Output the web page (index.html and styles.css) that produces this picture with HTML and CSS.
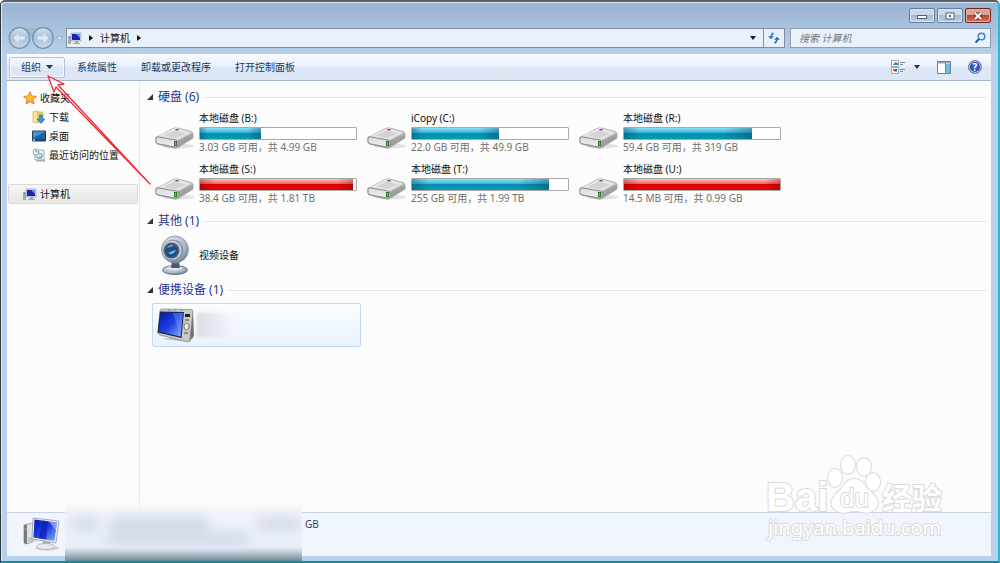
FILE: index.html
```html
<!DOCTYPE html>
<html lang="zh-CN">
<head>
<meta charset="utf-8">
<title>计算机</title>
<link rel="stylesheet" href="styles.css">
</head>
<body>
<svg class="defs" width="0" height="0" aria-hidden="true">
  <defs>
    <linearGradient id="metal" x1="0" y1="0" x2="1" y2="1"><stop offset="0" stop-color="#fafafa"/><stop offset=".55" stop-color="#cfcfcf"/><stop offset="1" stop-color="#858585"/></linearGradient>
    <linearGradient id="front" x1="0" y1="0" x2="0" y2="1"><stop offset="0" stop-color="#d7d7dc"/><stop offset="1" stop-color="#f2f2f8"/></linearGradient>
    <linearGradient id="screen" x1="0" y1="0" x2="1" y2="1"><stop offset="0" stop-color="#0716a8"/><stop offset=".5" stop-color="#1d3fe0"/><stop offset="1" stop-color="#8db6ff"/></linearGradient>
    <radialGradient id="ball" cx=".4" cy=".3" r=".8"><stop offset="0" stop-color="#eef2f6"/><stop offset=".6" stop-color="#a9b6c6"/><stop offset="1" stop-color="#5c6b80"/></radialGradient>
    <linearGradient id="gold" x1="0" y1="0" x2="0" y2="1"><stop offset="0" stop-color="#ffe05a"/><stop offset="1" stop-color="#ff9c1c"/></linearGradient>
    <linearGradient id="disc" x1="0" y1="0" x2="0" y2="1"><stop offset="0" stop-color="#d3e0ef"/><stop offset=".5" stop-color="#a9bfd8"/><stop offset="1" stop-color="#c9dbef"/></linearGradient>
    <symbol id="drive" viewBox="0 0 40 24">
      <ellipse cx="23" cy="20" rx="16" ry="2.500" fill="#000" opacity=".1"/>
      <path d="M1 11.500 17 3q3-1.500 6-1l13 3.500q2 .8 2 2.500v4L23 21.500q-2 1-4 .5L2 18q-1-1-1-3z" fill="url(#metal)" stroke="#9a9a9a" stroke-width=".7"/>
      <path d="M23 14.500 37.500 7.500v4.500L23 20.500z" fill="#8d8d8d" opacity=".55"/>
      <path d="M2.500 10.500 18 3q2-1 4-.5l14 4-14 7.500z" fill="#e6e6e6"/>
      <path d="M9 9.500 20 4.500l11 2.800-11 5z" fill="#d3d3d3"/>
      <path d="M1 12q0-1.500 2-1.200L21 14q2 .5 2 2v3q0 2-3 2L3 17.800q-2-.5-2-2z" fill="url(#front)" stroke="#808080" stroke-width=".9"/>
      <ellipse cx="22" cy="3.800" rx="2" ry=".8" fill="#555"/>
      <path d="M19 15h3v5h-3z" fill="#247d15"/><path d="M20 16h1v3h-1z" fill="#55db28"/>
    </symbol>
    <symbol id="pc" viewBox="0 0 14 13">
      <path d="M0 4h3v8H0z" fill="#a4a9b0"/><path d="M1 5h1v1H1z" fill="#2d9a3a"/>
      <path d="M3 1h10v8H3z" fill="#d8dce2" stroke="#989ea8" stroke-width=".7"/>
      <path d="M4 2h8v6H4z" fill="#1623b4"/><path d="M8 2h4v4z" fill="#6794ef"/>
      <path d="M7 9h3v2H7zM5 11h7v1H5z" fill="#9fa6af"/>
    </symbol>
  </defs>
</svg>

<div class="window">
  <header class="titlebar">
    <button class="cap" aria-label="最小化"><svg width="10" height="8"><rect x=".5" y="3.500" width="9" height="3" fill="#fff" stroke="#555f6c"/></svg></button>
    <button class="cap" aria-label="最大化"><svg width="10" height="8"><rect x="1" y="1" width="8" height="6" fill="#fff" stroke="#555f6c"/><rect x="4" y="3" width="2" height="2" fill="#667" /></svg></button>
    <button class="cap cap-close" aria-label="关闭"><svg width="10" height="8"><path d="m2 1 6 6M8 1 2 7" stroke="#60383a" stroke-width="4"/><path d="m2 1 6 6M8 1 2 7" stroke="#fff" stroke-width="2"/></svg></button>
  </header>

  <nav class="navrow">
    <svg class="travel" width="56" height="24" viewBox="0 0 56 24">
      <path d="M12 2h23v3q-5 0-8 5h-3q-3-5-12-5z" fill="#9fb7d2"/>
      <g fill="url(#disc)" stroke="#7d90a6" stroke-width="1.300"><circle cx="12.500" cy="12" r="10.300"/><circle cx="36" cy="12" r="10.300"/></g>
      <g fill="#dce7f3" stroke="#b3c5da" stroke-width=".7"><path d="m6 12 6-6v4h6v4h-6v4z"/><path d="m42 12-6-6v4h-6v4h6v4z"/></g>
      <path d="m49.500 10.500h6l-3 4z" fill="#e6eef7" stroke="#8fa5bf" stroke-width=".8"/>
    </svg>
    <div class="address">
      <svg width="14" height="13"><use href="#pc"/></svg>
      <svg width="4" height="6"><path d="m0 0 4 3-4 3z" fill="#111"/></svg>
      <a class="crumb" href="#">计算机</a>
      <svg width="4" height="6"><path d="m0 0 4 3-4 3z" fill="#111"/></svg>
      <button class="plain drop" aria-label="历史"><svg width="6" height="4"><path d="M0 0h6L3 4z" fill="#101858"/></svg></button>
      <button class="plain refresh" aria-label="刷新"><svg width="12" height="12" viewBox="0 0 12 12" fill="none" stroke="#2f7fc6" stroke-width="1.500"><path d="M5.500 1Q3 2 3 6"/><path d="M.5 4.500 3 7l2.500-2.500z" fill="#2f7fc6" stroke-width=".6"/><path d="M6.500 11Q9 10 9 6" stroke="#2863a8"/><path d="M6.500 7.500 9 5l2.500 2.500z" fill="#2863a8" stroke-width=".6"/></svg></button>
    </div>
    <label class="search">
      <input type="text" placeholder="搜索 计算机" aria-label="搜索">
      <svg width="12" height="12" viewBox="0 0 12 12" fill="none"><circle cx="7.500" cy="4.500" r="3.300" stroke="#3b86c8" stroke-width="1.500"/><path d="M5 7 1.500 10.500" stroke="#27599a" stroke-width="2"/></svg>
    </label>
  </nav>

  <div class="pane">
    <div class="toolbar">
      <button class="tool tool-on">组织 <svg width="7" height="4"><path d="M0 0h7L3.500 4z" fill="#1e3350"/></svg></button>
      <button class="tool">系统属性</button>
      <button class="tool">卸载或更改程序</button>
      <button class="tool">打开控制面板</button>
      <span class="spacer"></span>
      <button class="plain view" aria-label="更改视图">
        <svg width="15" height="14" viewBox="0 0 15 14"><path d="M.5.500h7v6h-7zM.5 7.500h7v6h-7z" fill="#fff" stroke="#9ba7b6"/><path d="M2 5h5V3L4 2z" fill="#2e93a8"/><path d="M2 9h2v2H2z" fill="#e54c2d"/><path d="M4 9h2v2H4z" fill="#3159d1"/><path d="M3 11h3v1H3z" fill="#e4b51c"/><path d="M9 2.500h5M9 4.500h3M9 9.500h5M9 11.500h3" stroke="#7c899b"/></svg>
        <svg width="6" height="4"><path d="M0 0h6L3 4z" fill="#1e3350"/></svg>
      </button>
      <button class="plain" aria-label="预览窗格"><svg width="14" height="13"><path d="M.5.500h13v12H.5z" fill="#fff" stroke="#6e8299"/><path d="M1 1h12v1.500H1z" fill="#8da6bf"/><path d="M9 3h4v9H9z" fill="#69bedd"/><path d="M8.500 2v10" stroke="#6e8299"/></svg></button>
      <button class="plain" aria-label="帮助"><span class="help">?</span></button>
    </div>

    <div class="main">
      <aside class="side">
        <a class="node" href="#"><svg width="14" height="14" viewBox="0 0 14 14"><path d="m7 .8 1.800 4.200 4.600.4-3.500 3 1.100 4.600L7 10.600 3 13l1.100-4.600-3.500-3L5.200 5z" fill="url(#gold)" stroke="#e27818" stroke-width=".9"/></svg>收藏夹</a>
        <a class="node sub" href="#"><svg width="14" height="14" viewBox="0 0 14 14"><path d="M1 1.500 6 1v12l-5-1z" fill="#f7e596" stroke="#cfb256" stroke-width=".7"/><path d="M6 2h5v10H6z" fill="#edcf70" stroke="#cfb256" stroke-width=".7"/><path d="M7.500 5h3v4H13l-4 4.500L5 9h2.500z" fill="#2c9be0" stroke="#1c6eae" stroke-width=".6"/></svg>下载</a>
        <a class="node sub" href="#"><svg width="14" height="12" viewBox="0 0 14 12"><path d="M.5 1h13v10H.5z" fill="#1f62a8" stroke="#263e5a"/><path d="M1 1.500h12L1 8z" fill="#4c91cc"/><path d="M1 9h12v2H1z" fill="#2c4460"/><path d="M1 9h2v2H1z" fill="#6ec7ee"/></svg>桌面</a>
        <a class="node sub" href="#"><svg width="14" height="14" viewBox="0 0 14 14"><path d="M3 2h9v10H3z" fill="#edf3f6" stroke="#8c9ca6" stroke-width=".8"/><path d="M5 12h8v1.500H4z" fill="#9aacb6"/><circle cx="4" cy="4" r="3" fill="#fff" stroke="#8999a6"/><path d="M4 2v2h2M7 6h3v3H7" fill="none" stroke="#5591b1"/><path d="M5 8v2h5" fill="none" stroke="#6d8696"/></svg>最近访问的位置</a>
        <a class="node chosen" href="#"><svg width="14" height="13"><use href="#pc"/></svg>计算机</a>
      </aside>

      <main class="list">
        <h2 class="group"><svg width="6" height="6"><path d="M6 0v6H0z" fill="#333"/></svg>硬盘 (6)</h2>
        <div class="drives">
          <div class="drive"><svg class="disk" width="40" height="24"><use href="#drive"/></svg><div class="info"><span class="name">本地磁盘 (B:)</span><div class="meter"><i class="fill" style="width:39%"></i></div><span class="free">3.03 GB 可用，共 4.99 GB</span></div></div>
          <div class="drive"><svg class="disk" width="40" height="24"><use href="#drive"/></svg><div class="info"><span class="name">iCopy (C:)</span><div class="meter"><i class="fill" style="width:56%"></i></div><span class="free">22.0 GB 可用，共 49.9 GB</span></div></div>
          <div class="drive"><svg class="disk" width="40" height="24"><use href="#drive"/></svg><div class="info"><span class="name">本地磁盘 (R:)</span><div class="meter"><i class="fill" style="width:82%"></i></div><span class="free">59.4 GB 可用，共 319 GB</span></div></div>
          <div class="drive"><svg class="disk" width="40" height="24"><use href="#drive"/></svg><div class="info"><span class="name">本地磁盘 (S:)</span><div class="meter"><i class="fill full" style="width:98%"></i></div><span class="free">38.4 GB 可用，共 1.81 TB</span></div></div>
          <div class="drive"><svg class="disk" width="40" height="24"><use href="#drive"/></svg><div class="info"><span class="name">本地磁盘 (T:)</span><div class="meter"><i class="fill" style="width:88%"></i></div><span class="free">255 GB 可用，共 1.99 TB</span></div></div>
          <div class="drive"><svg class="disk" width="40" height="24"><use href="#drive"/></svg><div class="info"><span class="name">本地磁盘 (U:)</span><div class="meter"><i class="fill full" style="width:100%"></i></div><span class="free">14.5 MB 可用，共 0.99 GB</span></div></div>
        </div>

        <h2 class="group"><svg width="6" height="6"><path d="M6 0v6H0z" fill="#333"/></svg>其他 (1)</h2>
        <div class="device camera">
          <svg width="40" height="40" viewBox="0 0 40 40"><ellipse cx="20" cy="35" rx="12.500" ry="4.500" fill="url(#ball)" stroke="#56657a" stroke-width=".8"/><ellipse cx="20" cy="33" rx="7" ry="2" fill="#dce4ec"/><path d="M17 26h7l1 7h-9z" fill="#4d5b6f"/><circle cx="20" cy="14.500" r="13.500" fill="url(#ball)" stroke="#8593a6" stroke-width=".8"/><circle cx="18" cy="15" r="10.500" fill="#8797aa"/><circle cx="17" cy="15" r="9.500" fill="#c6d0dc"/><circle cx="16.500" cy="15.500" r="8" fill="#4b5c72"/><circle cx="16.500" cy="16" r="6" fill="#1d4f85"/><path d="M13 18q5 3 8-3-4 1-8 3z" fill="#64c1f2"/><path d="M12 13q3-4 7-2-4 0-7 2z" fill="#c5d9e9"/></svg>
          <span class="name">视频设备</span>
        </div>

        <h2 class="group"><svg width="6" height="6"><path d="M6 0v6H0z" fill="#333"/></svg>便携设备 (1)</h2>
        <div class="device portable">
          <svg width="40" height="36" viewBox="0 0 40 36"><path d="M6 32 33 35l5-5-4-2z" fill="#000" opacity=".2"/><path d="M4 4q0-2 2-2l29 .5q2 0 2 2L34 33q0 2-2 2L4 28q-2-.5-2-2.500z" fill="#c9c8c2" stroke="#8f8d88" stroke-width=".8"/><path d="M33.500 34 37 5l1 24z" fill="#77746d"/><path d="M4 4.500 28 5 25.500 31 1.500 25.500z" fill="#172351"/><path d="M5 5.500 27 6 24.500 29.500 2.500 24.500z" fill="url(#screen)"/><path d="m17 6 10 0-2.500 23.500z" fill="#86a8ff" opacity=".35"/><path d="M29 7h5v3h-5z" fill="#222"/><path d="M29 13h4M28 26h4" stroke="#777" stroke-width="1.500"/><ellipse cx="30.500" cy="19.500" rx="2.500" ry="3.200" fill="#eee" stroke="#777"/><path d="M12 3h3M18 3h2M24 3h3" stroke="#7c9a70" stroke-width="1.200"/></svg>
          <span class="smudge"></span>
        </div>
      </main>
    </div>

    <footer class="details">
      <svg width="38" height="34" viewBox="0 0 38 34">
        <ellipse cx="24" cy="31" rx="12" ry="2.500" fill="#000" opacity=".15"/>
        <path d="m1 8 9-2v19L3 27l-2-1z" fill="#dfe1e4" stroke="#92969b" stroke-width=".8"/><path d="M1 8h3v19l-3-1z" fill="#767b80"/><path d="M2 11h1.500v2H2z" fill="#45df20"/><path d="M5 20 14 22v2l-9 2z" fill="#c5c8cb"/>
        <path d="m20 24 7 1v4h-8z" fill="#adb0b5"/><ellipse cx="22.500" cy="29.500" rx="9" ry="3" fill="#e8e9ec" stroke="#aaaeb4" stroke-width=".8"/>
        <path d="m10 1 26 3-3 22-24-4z" fill="#eceef1" stroke="#969ba2" stroke-width=".8"/><path d="m11.500 2.500 22.500 3L31.500 24 10.500 20.500z" fill="url(#screen)"/><path d="m20 3.500 5 1-2 18-7-1z" fill="#0718bd" opacity=".65"/><path d="m26 4.500 8 1-1 8z" fill="#bcd0ff" opacity=".6"/>
      </svg>
      <span class="memory">GB</span>
      <div class="veil"><i class="blot one"></i><i class="blot two"></i><i class="blot three"></i><i class="blot four"></i></div>
    </footer>
  </div>

  <svg class="pointer" width="110" height="116" viewBox="0 0 110 116" aria-hidden="true"><path d="M108 109 16 10l6-1L6 1l6 16 2-5z" fill="#fff" fill-opacity=".5" stroke="#ee2c36" stroke-width="1.300" stroke-linejoin="round"/></svg>

  <svg class="mark" width="184" height="92" viewBox="0 0 184 92">
    <text x="1" y="54" class="mark-big">Bai</text>
    <ellipse cx="70" cy="21" rx="7" ry="9"/><ellipse cx="83" cy="8" rx="7" ry="9"/><ellipse cx="99" cy="10" rx="7" ry="9"/><ellipse cx="108" cy="25" rx="7" ry="9"/>
    <path d="M89 22q8 0 12 8l8 8q8 9 0 15-5 4-12 2-8-2-14 0-8 2-13-2-7-6 0-15l8-8q4-8 11-8z"/>
    <text x="117" y="52" class="mark-cn">经验</text>
    <text x="3" y="78" class="mark-url">jingyan.baidu.com</text>
    <text x="75" y="50" class="mark-du">du</text>
  </svg>
</div>
</body>
</html>
```
FILE: styles.css
```css
* { box-sizing: border-box; }
body {
  margin: 0;
  font: 10px/14px "Noto Sans", "Noto Sans CJK SC", sans-serif;
  color: #111;
}
.defs { position: absolute; }
svg { display: block; flex: none; }
a { color: inherit; text-decoration: none; }
button { font: inherit; color: inherit; }
.window {
  position: relative;
  display: flex;
  flex-direction: column;
  min-height: 100vh;
  padding: 0 7px 5px 6px;
  overflow: hidden;
  background: linear-gradient(#99b3d2, #b9d1ea 54px);
  border: 1px solid #30363f;
  border-top: 2px solid #5a6068;
  border-right: 2px solid #35b5d0;
  border-bottom: 2px solid #168b98;
  border-radius: 5px 5px 0 0;
  box-shadow: inset 1px 1px #dce9f6;
}
.titlebar {
  display: flex;
  justify-content: flex-end;
  gap: 2px;
  height: 24px;
  padding: 6px 0 3px;
}
.cap {
  display: grid;
  place-items: center;
  width: 26px;
  height: 15px;
  padding: 0;
  border: 1px solid #657d9b;
  border-radius: 2px;
  background: linear-gradient(#cbdaea 48%, #a4bad3 50%, #bdd2e8);
  box-shadow: inset 0 0 0 1px #d8e5f2;
}
.cap-close {
  border-color: #63282c;
  background: linear-gradient(#e1a092 48%, #be432f 50%, #d8765f);
  box-shadow: inset 0 0 0 1px #e8aa9b;
}
.plain {
  display: flex;
  align-items: center;
  gap: 8px;
  padding: 0;
  border: 0;
  background: none;
}
.navrow { display: flex; height: 28px; padding-top: 2px; }
.travel { margin: -2px 3px 0 0; }
.address, .search {
  display: flex;
  align-items: center;
  height: 20px;
  background: #eaf1fa;
  border: 1px solid #7e8c9c;
}
.address { flex: 1; gap: 7px; padding-left: 1px; margin-right: 5px; }
.drop { margin-left: auto; }
.refresh {
  justify-content: center;
  width: 21px;
  height: 18px;
  border-left: 1px solid #8290a1;
}
.search { width: 201px; padding: 0 4px 0 8px; border-color: #8c9fb5; }
.search input {
  flex: 1;
  min-width: 0;
  padding: 0;
  border: 0;
  outline: 0;
  background: none;
  font: italic 10px/14px "Noto Sans", "Noto Sans CJK SC", sans-serif;
}
.search input::placeholder { color: #707780; opacity: 1; }
.pane {
  display: flex;
  flex: 1;
  flex-direction: column;
  background: #fcfcfc;
}
.toolbar {
  display: flex;
  align-items: center;
  height: 27px;
  padding: 0 9px 0 2px;
  color: #1e395b;
  background: linear-gradient(#f9fbfe, #e7eff9 48%, #dce6f4 52%, #dde7f5);
  border-bottom: 1px solid #a5b5cb;
}
.tool {
  display: flex;
  align-items: center;
  gap: 5px;
  height: 21px;
  padding: 0 11px;
  border: 1px solid transparent;
  border-radius: 2px;
  background: none;
}
.tool-on { border-color: #b1c4dc; box-shadow: inset 0 0 0 1px #f3f8fd; }
.spacer { flex: 1; }
.toolbar .plain { margin-left: 17px; }
.help {
  width: 14px;
  height: 14px;
  border: 1px solid #7c8592;
  border-radius: 50%;
  background: radial-gradient(#3e6be0, #122f9b);
  box-shadow: inset 0 0 0 1px #c1cce2;
  color: #fff;
  font-weight: bold;
  line-height: 12px;
}
.main { display: flex; flex: 1; }
.side {
  width: 133px;
  padding: 7px 1px;
  border-right: 1px solid #e0e8f3;
}
.node {
  display: flex;
  align-items: center;
  gap: 3px;
  height: 19px;
  padding-left: 14px;
  border: 1px solid transparent;
  white-space: nowrap;
}
.sub { padding-left: 23px; }
.chosen {
  height: 20px;
  margin-top: 20px;
  border-color: #dcdcdc;
  border-radius: 2px;
  background: linear-gradient(#f5f5f5, #e7e7e7);
}
.list { flex: 1; padding: 7px 4px 0 7px; }
.group {
  display: flex;
  align-items: center;
  gap: 5px;
  height: 18px;
  margin: 0;
  color: #26388f;
  font-size: 12px;
  font-weight: normal;
  line-height: 18px;
}
.group::after { content: ""; flex: 1; height: 1px; background: #e4e6ea; }
.drives {
  display: grid;
  grid-template-columns: repeat(auto-fill, 212px);
  gap: 1px 0;
  padding: 5px 0 0 8px;
}
.drive { display: flex; align-items: center; gap: 4px; height: 50px; }
.disk { margin-top: 4px; }
.info { width: 158px; height: 50px; }
.name, .free { display: block; height: 14px; white-space: nowrap; }
.free { color: #707070; }
.meter {
  height: 13px;
  margin: 2px 0 0;
  border: 1px solid #a9a9a9;
  border-radius: 1px;
  background: #fff;
}
.fill {
  display: block;
  height: 11px;
  background:
    linear-gradient(90deg, #003f5966, transparent 12%, transparent 78%, #003f5966),
    linear-gradient(#8fe0f4, #35b7dc 43%, #048eae 50%, #079bb5);
}
.full {
  background:
    linear-gradient(90deg, #80000055, transparent 10%, transparent 90%, #80000055),
    linear-gradient(#ffc2c2, #fa6060 43%, #dc0000 50%, #e40000);
}
.device { display: flex; align-items: center; gap: 4px; }
.camera { height: 40px; margin: 5px 0 6px 8px; }
.portable {
  width: 209px;
  height: 44px;
  margin: 4px 0 0 5px;
  padding-left: 3px;
  gap: 1px;
  border: 1px solid #c0daf3;
  border-radius: 2px;
  background: linear-gradient(#fafcfe, #e9f2fd);
}
.smudge {
  width: 38px;
  height: 24px;
  background: linear-gradient(90deg, #d9dfe5, #d9dfe500);
  filter: blur(1px);
}
.details {
  position: relative;
  display: flex;
  height: 44px;
  padding: 4px 16px;
  background: #f0f4fc;
  border-top: 1px solid #c6d3e5;
  color: #35445c;
}
.memory { margin-left: 244px; }
.veil {
  position: absolute;
  left: 58px;
  top: -12px;
  width: 237px;
  height: 62px;
  overflow: hidden;
  background: linear-gradient(#fbfcfd00, #f0f3f9 12px, #e9effa 46px, #9eafbd 55px, #63777f);
}
.blot {
  position: absolute;
  height: 12px;
  border-radius: 5px;
  background: #d0d8e5;
  filter: blur(6px);
}
.one { left: 6px; top: 17px; width: 28px; }
.two { left: 45px; top: 17px; width: 98px; height: 15px; }
.three { left: 42px; top: 32px; width: 142px; }
.four { left: 192px; top: 17px; width: 44px; }
.pointer { position: absolute; left: 41px; top: 73px; }
.mark {
  position: absolute;
  right: 49px;
  bottom: 12px;
  overflow: visible;
  fill: #fff;
  stroke: #dadada;
  stroke-width: 2px;
  stroke-linejoin: round;
  paint-order: stroke;
}
.mark-big { font: bold 40px "Liberation Sans", sans-serif; }
.mark-cn { font: bold 30px "Noto Sans CJK SC", sans-serif; }
.mark-du { font: 26px "Liberation Sans", sans-serif; }
.mark-url { font: 20px "Noto Sans", sans-serif; }
```
